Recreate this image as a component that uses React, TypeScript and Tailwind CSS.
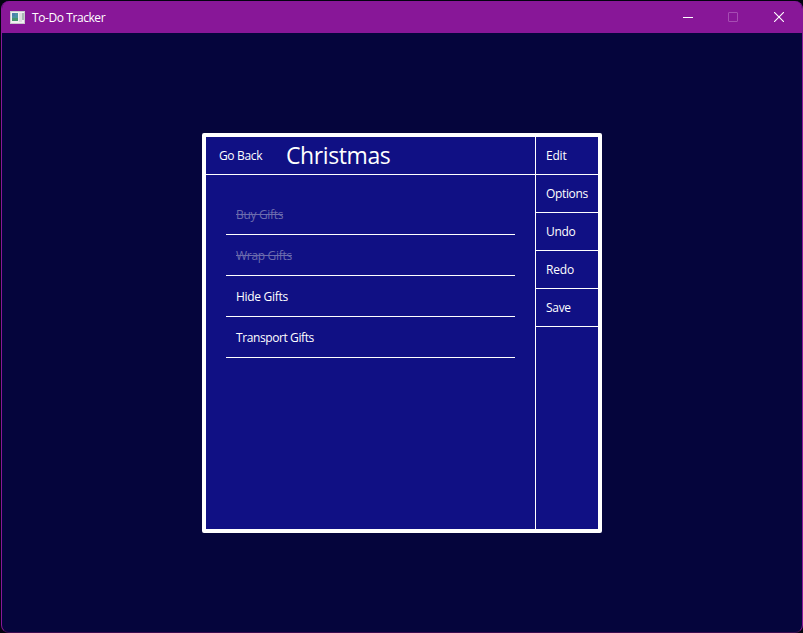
const actions = [
  { label: "Edit", track: "tracking-[-0.2px]" },
  { label: "Options", track: "tracking-[-0.35px]" },
  { label: "Undo", track: "tracking-[-0.35px]" },
  { label: "Redo", track: "tracking-[-0.2px]" },
  { label: "Save", track: "tracking-[-0.3px]" },
];

const tasks = [
  { label: "Buy Gifts", done: true, track: "tracking-[-0.33px]" },
  { label: "Wrap Gifts", done: true, track: "tracking-[-0.3px]" },
  { label: "Hide Gifts", done: false, track: "tracking-[-0.3px]" },
  { label: "Transport Gifts", done: false, track: "tracking-[-0.4px]" },
];

function TitleBar() {
  return (
    <header className="flex h-8 shrink-0 items-center bg-[#881798] pl-2">
      <svg width="16" height="16" viewBox="0 0 16 16" shapeRendering="crispEdges">
        <rect x="0" y="2" width="15" height="13" fill="#c9c9cd" />
        <rect x="1" y="3" width="13" height="11" fill="#f1f1f1" />
        <rect x="2" y="4" width="6" height="8" fill="#4b93a4" />
        <rect x="2" y="9" width="6" height="3" fill="#46966f" />
        <rect x="2" y="4" width="3" height="3" fill="#4c7fae" />
        <rect x="9" y="4" width="3" height="9" fill="#dedee0" />
        <rect x="12" y="4" width="2" height="7" fill="#a9b9b4" />
      </svg>
      <h1 className="ml-[6px] mt-[2px] text-[12px] leading-4 tracking-[-0.42px]">To-Do Tracker</h1>
      <div className="ml-auto flex">
        <div className="flex w-[44px] justify-center">
          <svg width="10" height="10" viewBox="0 0 10 10">
            <path d="M0 5.5h10" stroke="#fff" />
          </svg>
        </div>
        <div className="flex w-[46px] justify-center">
          <svg width="10" height="10" viewBox="0 0 10 10" fill="none">
            <rect x=".5" y=".5" width="9" height="9" rx=".5" stroke="#a64db3" />
          </svg>
        </div>
        <div className="flex w-[46px] justify-center">
          <svg width="10" height="10" viewBox="0 0 10 10">
            <path d="M0 0l10 10M10 0L0 10" stroke="#fff" strokeWidth="1.1" />
          </svg>
        </div>
      </div>
    </header>
  );
}

export default function App() {
  return (
    <div className="h-[633px] w-[803px] overflow-hidden bg-[#02030f] pl-px pt-px font-['Open_Sans','Noto_Sans',sans-serif] text-[12px] text-white [font-variant-ligatures:none]">
      <div className="flex h-[632px] flex-col overflow-hidden rounded-lg border border-t-0 border-b-[#3c0c50] border-x-[#881798] bg-[#05053c]">
        <TitleBar />
        <main className="flex grow justify-center pt-[100px]">
          <section className="flex h-[400px] w-[400px] rounded-[2px] border-4 border-white bg-[#101084]">
            <div className="w-[329px]">
              <div className="flex h-[38px] items-center border-b border-white pl-[13px]">
                <button className="w-[67px] text-left tracking-[-0.35px]">Go Back</button>
                <h2 className="pb-[2px] text-[23px] leading-8 tracking-[-0.4px]">Christmas</h2>
              </div>
              <ul className="px-5 pt-[19px]">
                {tasks.map((t) => (
                  <li key={t.label} className="flex h-[41px] items-center border-b border-white pl-[10px] pt-[2px]">
                    <span className={`${t.track} ${t.done ? "text-[#6c6cae] line-through" : ""}`}>{t.label}</span>
                  </li>
                ))}
              </ul>
            </div>
            <nav className="w-[63px] border-l border-white">
              {actions.map((a) => (
                <button key={a.label} className={`flex h-[38px] w-full items-center border-b border-white pl-[10px] ${a.track}`}>
                  {a.label}
                </button>
              ))}
            </nav>
          </section>
        </main>
      </div>
    </div>
  );
}
